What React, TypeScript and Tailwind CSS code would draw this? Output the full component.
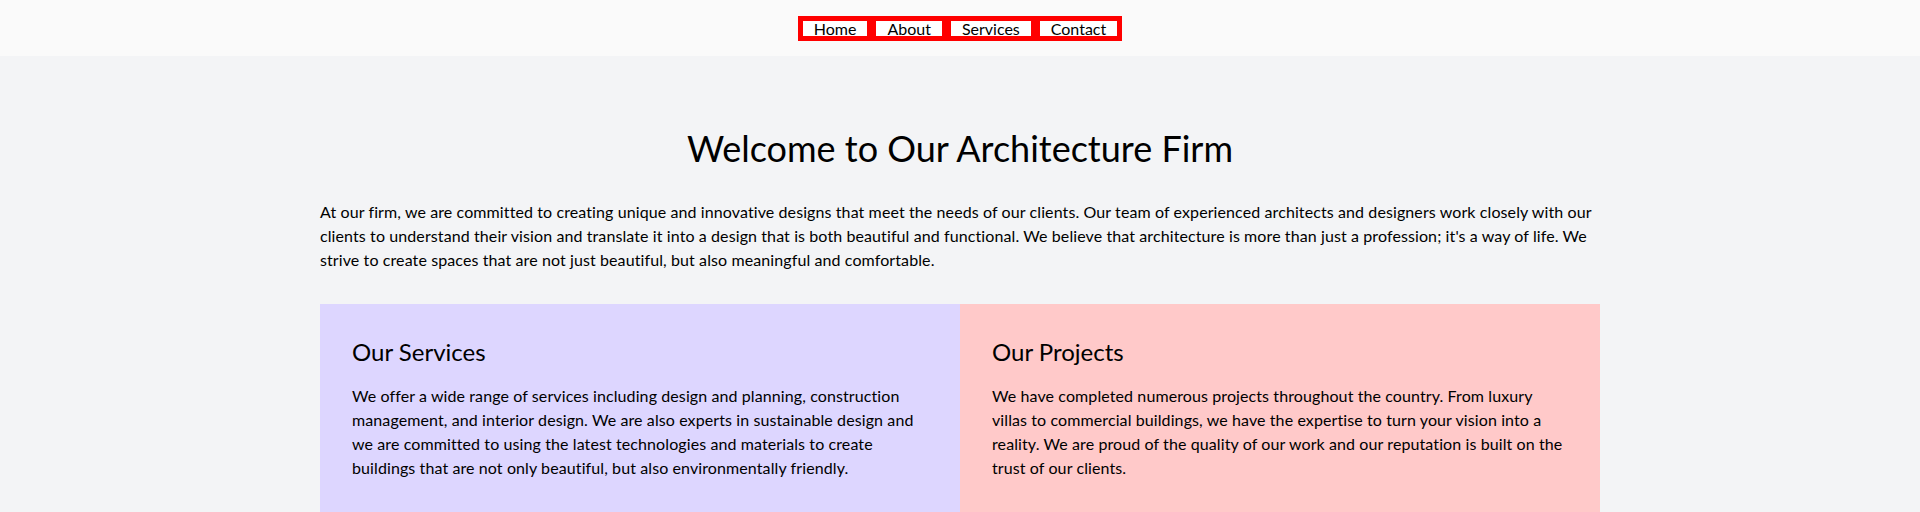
const links = ["Home", "About", "Services", "Contact"];

const cards = [
  {
    title: "Our Services",
    bg: "bg-violet-200",
    text: "We offer a wide range of services including design and planning, construction management, and interior design. We are also experts in sustainable design and we are committed to using the latest technologies and materials to create buildings that are not only beautiful, but also environmentally friendly.",
  },
  {
    title: "Our Projects",
    bg: "bg-red-200",
    text: "We have completed numerous projects throughout the country. From luxury villas to commercial buildings, we have the expertise to turn your vision into a reality. We are proud of the quality of our work and our reputation is built on the trust of our clients.",
  },
];

export default function App() {
  return (
    <div className="min-h-screen bg-gray-100 text-black font-['Segoe_UI','Lato',sans-serif]">
      <header className="h-14 bg-[#fafafa] flex items-center justify-center">
        <nav>
          <ul className="flex gap-[9px] bg-[#ff0000] p-[5px]">
            {links.map((link) => (
              <li key={link} className="h-[15px] bg-white px-[11px] text-base leading-[15px]">
                <a href="#">{link}</a>
              </li>
            ))}
          </ul>
        </nav>
      </header>

      <main className="max-w-7xl mx-auto pt-[72px]">
        <h1 className="text-4xl leading-10 text-center mb-8">
          Welcome to Our Architecture Firm
        </h1>
        <p className="text-base leading-6 tracking-[0.1px] mb-8">
          At our firm, we are committed to creating unique and innovative designs that meet the needs of our clients. Our team of experienced architects and designers work closely with our clients to understand their vision and translate it into a design that is both beautiful and functional. We believe that architecture is more than just a profession; it's a way of life. We strive to create spaces that are not just beautiful, but also meaningful and comfortable.
        </p>
        <div className="grid grid-cols-2">
          {cards.map((card) => (
            <section key={card.title} className={`${card.bg} p-8`}>
              <h2 className="text-2xl leading-8 mb-4">{card.title}</h2>
              <p className="text-base leading-6 tracking-[0.1px]">{card.text}</p>
            </section>
          ))}
        </div>
      </main>
    </div>
  );
}
